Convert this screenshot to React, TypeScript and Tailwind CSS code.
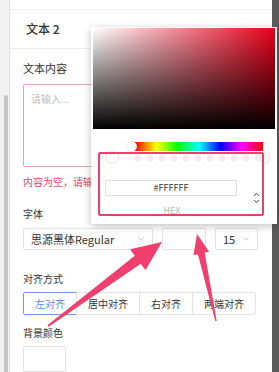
import { ChevronDown, ChevronUp } from "lucide-react"

const ALIGNS = ["左对齐", "居中对齐", "右对齐", "两端对齐"]

function ColorPicker() {
  return (
    <div className="absolute left-[91px] top-[27px] h-[197px] w-[186px] bg-white shadow-[0_2px_8px_rgba(0,0,0,0.25)]">
      {/* saturation / value area */}
      <div className="mx-[2px] mt-[1px] h-[101px] bg-[linear-gradient(to_top,#000,transparent),linear-gradient(to_right,#fff,#e8001a)]" />

      {/* preview + sliders */}
      <div className="mt-[13px] flex items-start pl-[14px]">
        <div className="mt-[8px] h-[14px] w-[14px] rounded-full border border-[#e4e4e4] bg-white" />
        <div className="ml-[16px] flex flex-col">
          <div className="relative h-[9px] w-[128px] bg-[linear-gradient(to_right,#f00,#ff0,#0f0,#0ff,#00f,#f0f,#f00)]">
            <div className="absolute left-[-9px] top-[-1px] h-[11px] w-[11px] rounded-full border border-[#e8e8e8] bg-white" />
          </div>
          <div className="relative mt-[4px] h-[6px] w-[126px] bg-[repeating-linear-gradient(to_right,#ececec_0,#ececec_6px,#fff_6px,#fff_12px)] opacity-80">
            <div className="absolute right-[-10px] top-[-3px] h-[12px] w-[12px] rounded-full border border-[#e4e4e4] bg-[#f4f4f4]" />
          </div>
        </div>
      </div>

      {/* hex input */}
      <div className="mt-[16px] flex items-start pl-[14px]">
        <div className="flex h-[16px] w-[132px] items-center justify-center border border-[#dedede] text-[9px] text-[#333]">
          #FFFFFF
        </div>
        <div className="ml-[15px] mt-[10px] flex flex-col items-center text-[#333]">
          <ChevronUp size={9} strokeWidth={2.5} className="-mb-[2px]" />
          <ChevronDown size={9} strokeWidth={2.5} />
        </div>
      </div>
      <div className="w-[162px] text-center text-[9px] leading-[10px] text-[#b8b8b8]">HEX</div>

      {/* annotation box */}
      <div className="absolute left-[7px] top-[125px] h-[64px] w-[166px] rounded-[2px] border-2 border-[#ee3e6c]" />
    </div>
  )
}

function Arrows() {
  return (
    <svg className="pointer-events-none absolute left-0 top-0" width="279" height="372" viewBox="0 0 279 372">
      <polygon
        fill="#ef3f6d"
        points="47.4,325.2 134.8,255.8 130.1,249.3 162,242 145.5,270.3 140.8,263.8 48.6,326.8"
      />
      <polygon
        fill="#ef3f6d"
        points="216.7,320.9 204.7,252.8 209.1,251.8 197,234 193.5,255.2 197.9,254.2 215.3,321.1"
      />
    </svg>
  )
}

export default function App() {
  return (
    <div className="relative flex h-[372px] w-[279px] overflow-hidden bg-white font-['Noto_Sans_CJK_SC',sans-serif] text-[#333]">
      {/* left scroll strip */}
      <div className="flex w-[10px] flex-col border-r border-[#e2e2e2] bg-[#f1f1f1]">
        <div className="ml-[4px] mt-[95px] w-[4px] flex-1 rounded-t-sm bg-[#c6c6c6]" />
      </div>

      {/* main panel */}
      <div className="flex flex-1 flex-col">
        <div className="h-[11px] border-b border-[#efefef]" />
        <div className="flex h-[41px] items-center border-b border-[#ececec] pl-[16px] text-[12px] font-medium">
          文本 2
        </div>

        <div className="flex flex-col pl-[13px] pr-[14px] pt-[12px]">
          <div className="text-[11px] leading-[14px]">文本内容</div>
          <div className="mt-[9px] h-[83px] rounded-[2px] border border-[#eba0ad] px-[7px] pt-[6px] text-[10px] text-[#bdbdbd]">
            请输入...
          </div>
          <div className="mt-[8px] text-[10px] leading-[14px] text-[#e8435c]">内容为空，请输入文本内容</div>

          <div className="mt-[18px] text-[10px] leading-[14px]">字体</div>
          <div className="mt-[7px] flex h-[22px] gap-[9px]">
            <div className="flex w-[130px] items-center justify-between rounded-[2px] border border-[#e2e2e2] pl-[7px] pr-[6px] text-[11px]">
              <span>思源黑体Regular</span>
              <ChevronDown size={10} className="text-[#bbb]" />
            </div>
            <div className="w-[44px] rounded-[2px] border border-[#e2e2e2]" />
            <div className="flex w-[43px] items-center justify-between rounded-[2px] border border-[#e2e2e2] pl-[7px] pr-[6px] text-[11px]">
              <span>15</span>
              <ChevronDown size={10} className="text-[#bbb]" />
            </div>
          </div>

          <div className="mt-[22px] text-[10px] leading-[14px]">对齐方式</div>
          <div className="mt-[6px] flex h-[23px]">
            {ALIGNS.map((a, i) => (
              <div
                key={a}
                className={
                  i === 0
                    ? "flex items-center rounded-l-[2px] border border-[#6f95ee] px-[11px] text-[10px] text-[#5a85e6]"
                    : "-ml-px flex items-center border border-[#e2e2e2] px-[11px] text-[10px] last:rounded-r-[2px]"
                }
              >
                {a}
              </div>
            ))}
          </div>

          <div className="mt-[11px] text-[10px] leading-[14px]">背景颜色</div>
          <div className="mt-[6px] h-[26px] w-[43px] rounded-[2px] border border-[#e2e2e2]" />
        </div>
      </div>

      {/* right dark strip */}
      <div className="w-[7px] bg-[#5b5b5b]" />

      <ColorPicker />
      <Arrows />
    </div>
  )
}
